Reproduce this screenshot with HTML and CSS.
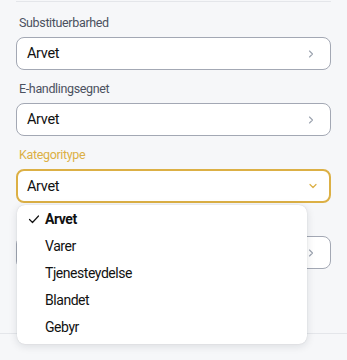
FILE: index.html
```html
<!DOCTYPE html>
<html lang="da">
<head>
<meta charset="utf-8">
<link rel="stylesheet" href="styles.css">
</head>
<body>
<div class="page">
  <div class="form">
    <div class="divider"></div>
    <div class="field">
      <div class="label">Substituerbarhed</div>
      <div class="control">
        <span class="value">Arvet</span>
        <svg class="chev" width="10" height="10" viewBox="0 0 10 10"><path d="M3.5 2 L6.5 5 L3.5 8" fill="none" stroke="#9ca3af" stroke-width="1.1" stroke-linecap="round" stroke-linejoin="round"/></svg>
      </div>
    </div>
    <div class="field">
      <div class="label">E-handlingsegnet</div>
      <div class="control">
        <span class="value">Arvet</span>
        <svg class="chev" width="10" height="10" viewBox="0 0 10 10"><path d="M3.5 2 L6.5 5 L3.5 8" fill="none" stroke="#9ca3af" stroke-width="1.1" stroke-linecap="round" stroke-linejoin="round"/></svg>
      </div>
    </div>
    <div class="field">
      <div class="label active">Kategoritype</div>
      <div class="select-wrap">
        <div class="control open">
          <span class="value">Arvet</span>
          <svg class="chev" width="10" height="10" viewBox="0 0 10 10"><path d="M2 3.5 L5 6.5 L8 3.5" fill="none" stroke="#dcb045" stroke-width="1.2" stroke-linecap="round" stroke-linejoin="round"/></svg>
        </div>
        <ul class="menu">
          <li class="item selected">
            <svg class="check" width="12" height="12" viewBox="0 0 12 12"><path d="M1.5 6.5 L4.5 9.5 L10.5 3" fill="none" stroke="#111" stroke-width="1.2" stroke-linecap="round" stroke-linejoin="round"/></svg>
            <span>Arvet</span>
          </li>
          <li class="item"><span>Varer</span></li>
          <li class="item"><span>Tjenesteydelse</span></li>
          <li class="item"><span>Blandet</span></li>
          <li class="item"><span>Gebyr</span></li>
        </ul>
      </div>
    </div>
    <div class="field covered">
      <div class="label">&nbsp;</div>
      <div class="control">
        <span class="value"></span>
        <svg class="chev" width="10" height="10" viewBox="0 0 10 10"><path d="M3.5 2 L6.5 5 L3.5 8" fill="none" stroke="#9ca3af" stroke-width="1.1" stroke-linecap="round" stroke-linejoin="round"/></svg>
      </div>
    </div>
  </div>
  <div class="footer"></div>
</div>
</body>
</html>
```
FILE: styles.css
```css
* { box-sizing: border-box; }
html, body { margin: 0; padding: 0; }
body {
  background: #f6f7f9;
  font-family: Roboto, "Liberation Sans", sans-serif;
  color: #111;
  width: 347px;
  height: 360px;
  overflow: hidden;
}
.page {
  display: flex;
  flex-direction: column;
}
.form {
  padding: 1px 16px 0 16px;
  height: 333px;
  display: flex;
  flex-direction: column;
  gap: 11px;
}
.divider {
  height: 1px;
  background: #e4e6ea;
  margin-bottom: 2px;
}
.field {
  display: flex;
  flex-direction: column;
  gap: 6px;
}
.label {
  font-size: 12.5px;
  line-height: 16px;
  color: #4b5160;
  padding-left: 3px;
  letter-spacing: -0.35px;
}
.label.active { color: #dcb045; }
.select-wrap { position: relative; }
.control {
  height: 33px;
  border: 1px solid #a3a8b4;
  border-radius: 8px;
  background: #fff;
  display: flex;
  align-items: center;
  justify-content: space-between;
  padding: 0 14px 0 10px;
}
.control.open {
  height: 34px;
  border: 2px solid #dcb045;
  padding-left: 9px;
  padding-right: 11px;
}
.value {
  font-size: 14.5px;
  letter-spacing: -0.35px;
  color: #111;
}
.menu {
  position: absolute;
  top: calc(100% + 2px);
  left: 1px;
  width: 290px;
  margin: 0;
  padding: 0;
  list-style: none;
  background: #fff;
  border-radius: 8px;
  box-shadow: 0 2px 8px rgba(20, 24, 40, 0.12), 0 0 1px rgba(20, 24, 40, 0.2);
  z-index: 2;
  height: 139px;
}
.item {
  height: 27px;
  display: flex;
  align-items: center;
  padding-left: 28px;
  font-size: 14px;
  letter-spacing: -0.45px;
  position: relative;
}
.item.selected { font-weight: 700; }
.check {
  position: absolute;
  left: 11px;
  top: 8px;
}
.footer {
  border-top: 1px solid #e4e6ea;
  height: 27px;
}
```
